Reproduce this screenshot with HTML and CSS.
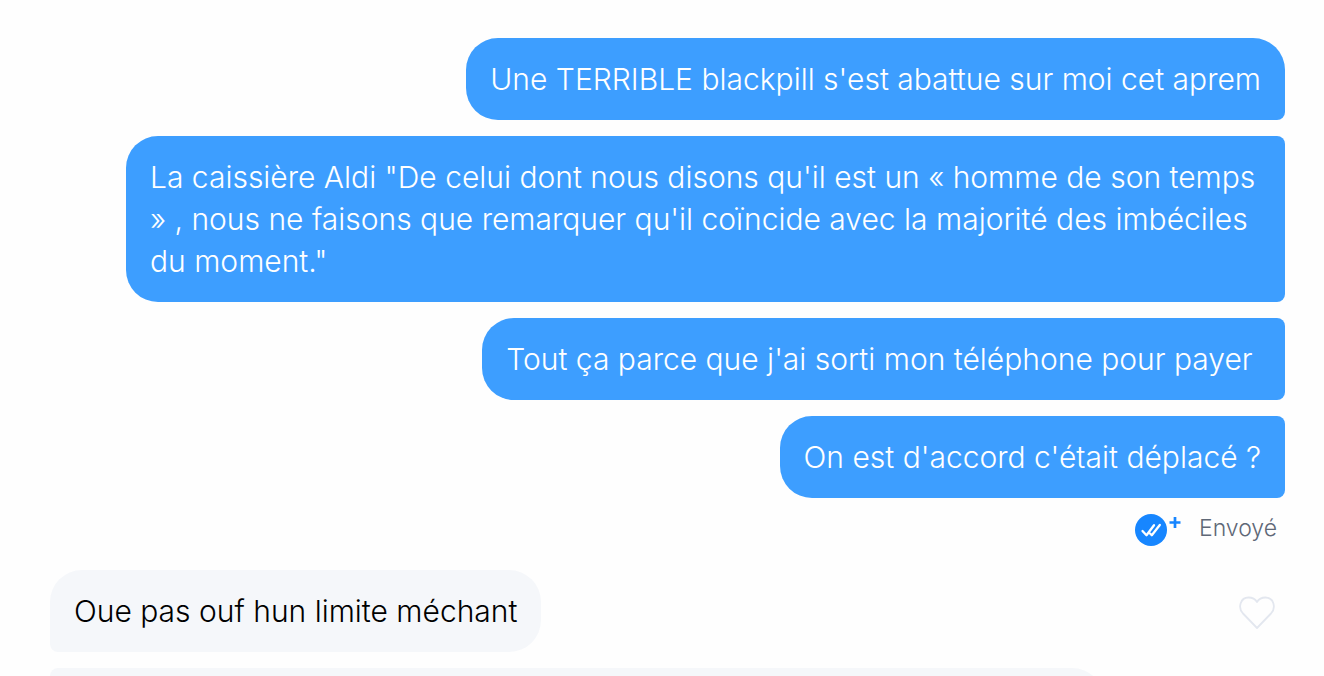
FILE: index.html
```html
<!DOCTYPE html>
<html lang="fr">
<head>
    <meta charset="UTF-8">
    <meta name="viewport" content="width=device-width, initial-scale=1.0">
    <title>Messages</title>
    <link rel="stylesheet" href="styles.css">
</head>
<body>
    <main class="chat">
        <div class="group sent">
            <div class="bubble">Une TERRIBLE blackpill s'est abattue sur moi cet aprem</div>
            <div class="bubble">La caissière Aldi "De celui dont nous disons qu'il est un « homme de son temps » , nous ne faisons que remarquer qu'il coïncide avec la majorité des imbéciles du moment."</div>
            <div class="bubble">Tout ça parce que j'ai sorti mon téléphone pour payer&nbsp;</div>
            <div class="bubble">On est d'accord c'était déplacé ?</div>
        </div>

        <div class="status">
            <svg class="receipt" width="48" height="32" viewBox="0 0 48 32" aria-hidden="true">
                <circle cx="16" cy="16" r="16" fill="#1786ff"/>
                <g fill="none" stroke="#fff" stroke-width="2.300" stroke-linecap="round" stroke-linejoin="round">
                    <path d="M7.500 17l4 4.200 7.500-10"/>
                    <path d="M15 19.500l1.800 1.700 8-10.200"/>
                </g>
                <path d="M40 3v11M34.500 8.500h11" fill="none" stroke="#1786ff" stroke-width="2.700"/>
            </svg>
            <span>Envoyé</span>
        </div>

        <div class="group received">
            <div class="row">
                <div class="bubble">Oue pas ouf hun limite méchant</div>
                <button class="like" type="button" aria-label="J'aime">
                    <svg width="36" height="34" viewBox="0 0 36 34" aria-hidden="true">
                        <path d="M18 32L4 17.500C-1.500 11.500 1.500 1.500 9.500 1.500C13.500 1.500 16.500 3.500 18 6C19.500 3.500 22.500 1.500 26.500 1.500C34.500 1.500 37.500 11.500 32 17.500Z" fill="none" stroke="#e3e7ef" stroke-width="1.800" stroke-linejoin="round"/>
                    </svg>
                </button>
            </div>
            <div class="bubble next"></div>
        </div>
    </main>
</body>
</html>
```
FILE: styles.css
```css
* {
    box-sizing: border-box;
}
body {
    margin: 0;
    height: 100vh;
    overflow: hidden;
    background-color: #fefefe;
    font-family: Inter, "Liberation Sans", sans-serif;
    font-weight: 300;
}
.chat {
    padding: 38px 39px 0 50px;
}
.group {
    display: flex;
    flex-direction: column;
    gap: 16px;
}
.bubble {
    max-width: calc(100% - 76px);
    min-height: 82px;
    padding: 20px 24px;
    font-size: 30px;
    line-height: 42px;
}
.sent {
    align-items: flex-end;
}
.sent .bubble {
    background-color: #3d9eff;
    color: #fff;
    border-radius: 32px 8px 8px 32px;
}
.sent .bubble:first-child {
    border-top-right-radius: 32px;
}
.status {
    display: flex;
    justify-content: flex-end;
    align-items: center;
    gap: 16px;
    height: 72px;
    padding: 0 8px 8px 0;
    color: #5f6877;
    font-size: 23px;
    line-height: 32px;
}
.status span {
    padding-bottom: 4px;
}
.received .bubble {
    background-color: #f5f7fa;
    color: #000;
    border-radius: 32px 32px 32px 8px;
}
.received .next {
    width: calc(100% - 181px);
    border-top-left-radius: 8px;
}
.row {
    display: flex;
    justify-content: space-between;
    align-items: center;
    padding-right: 10px;
}
.like {
    display: flex;
    padding: 4px 0 0;
    border: none;
    background: none;
    cursor: pointer;
}
```
